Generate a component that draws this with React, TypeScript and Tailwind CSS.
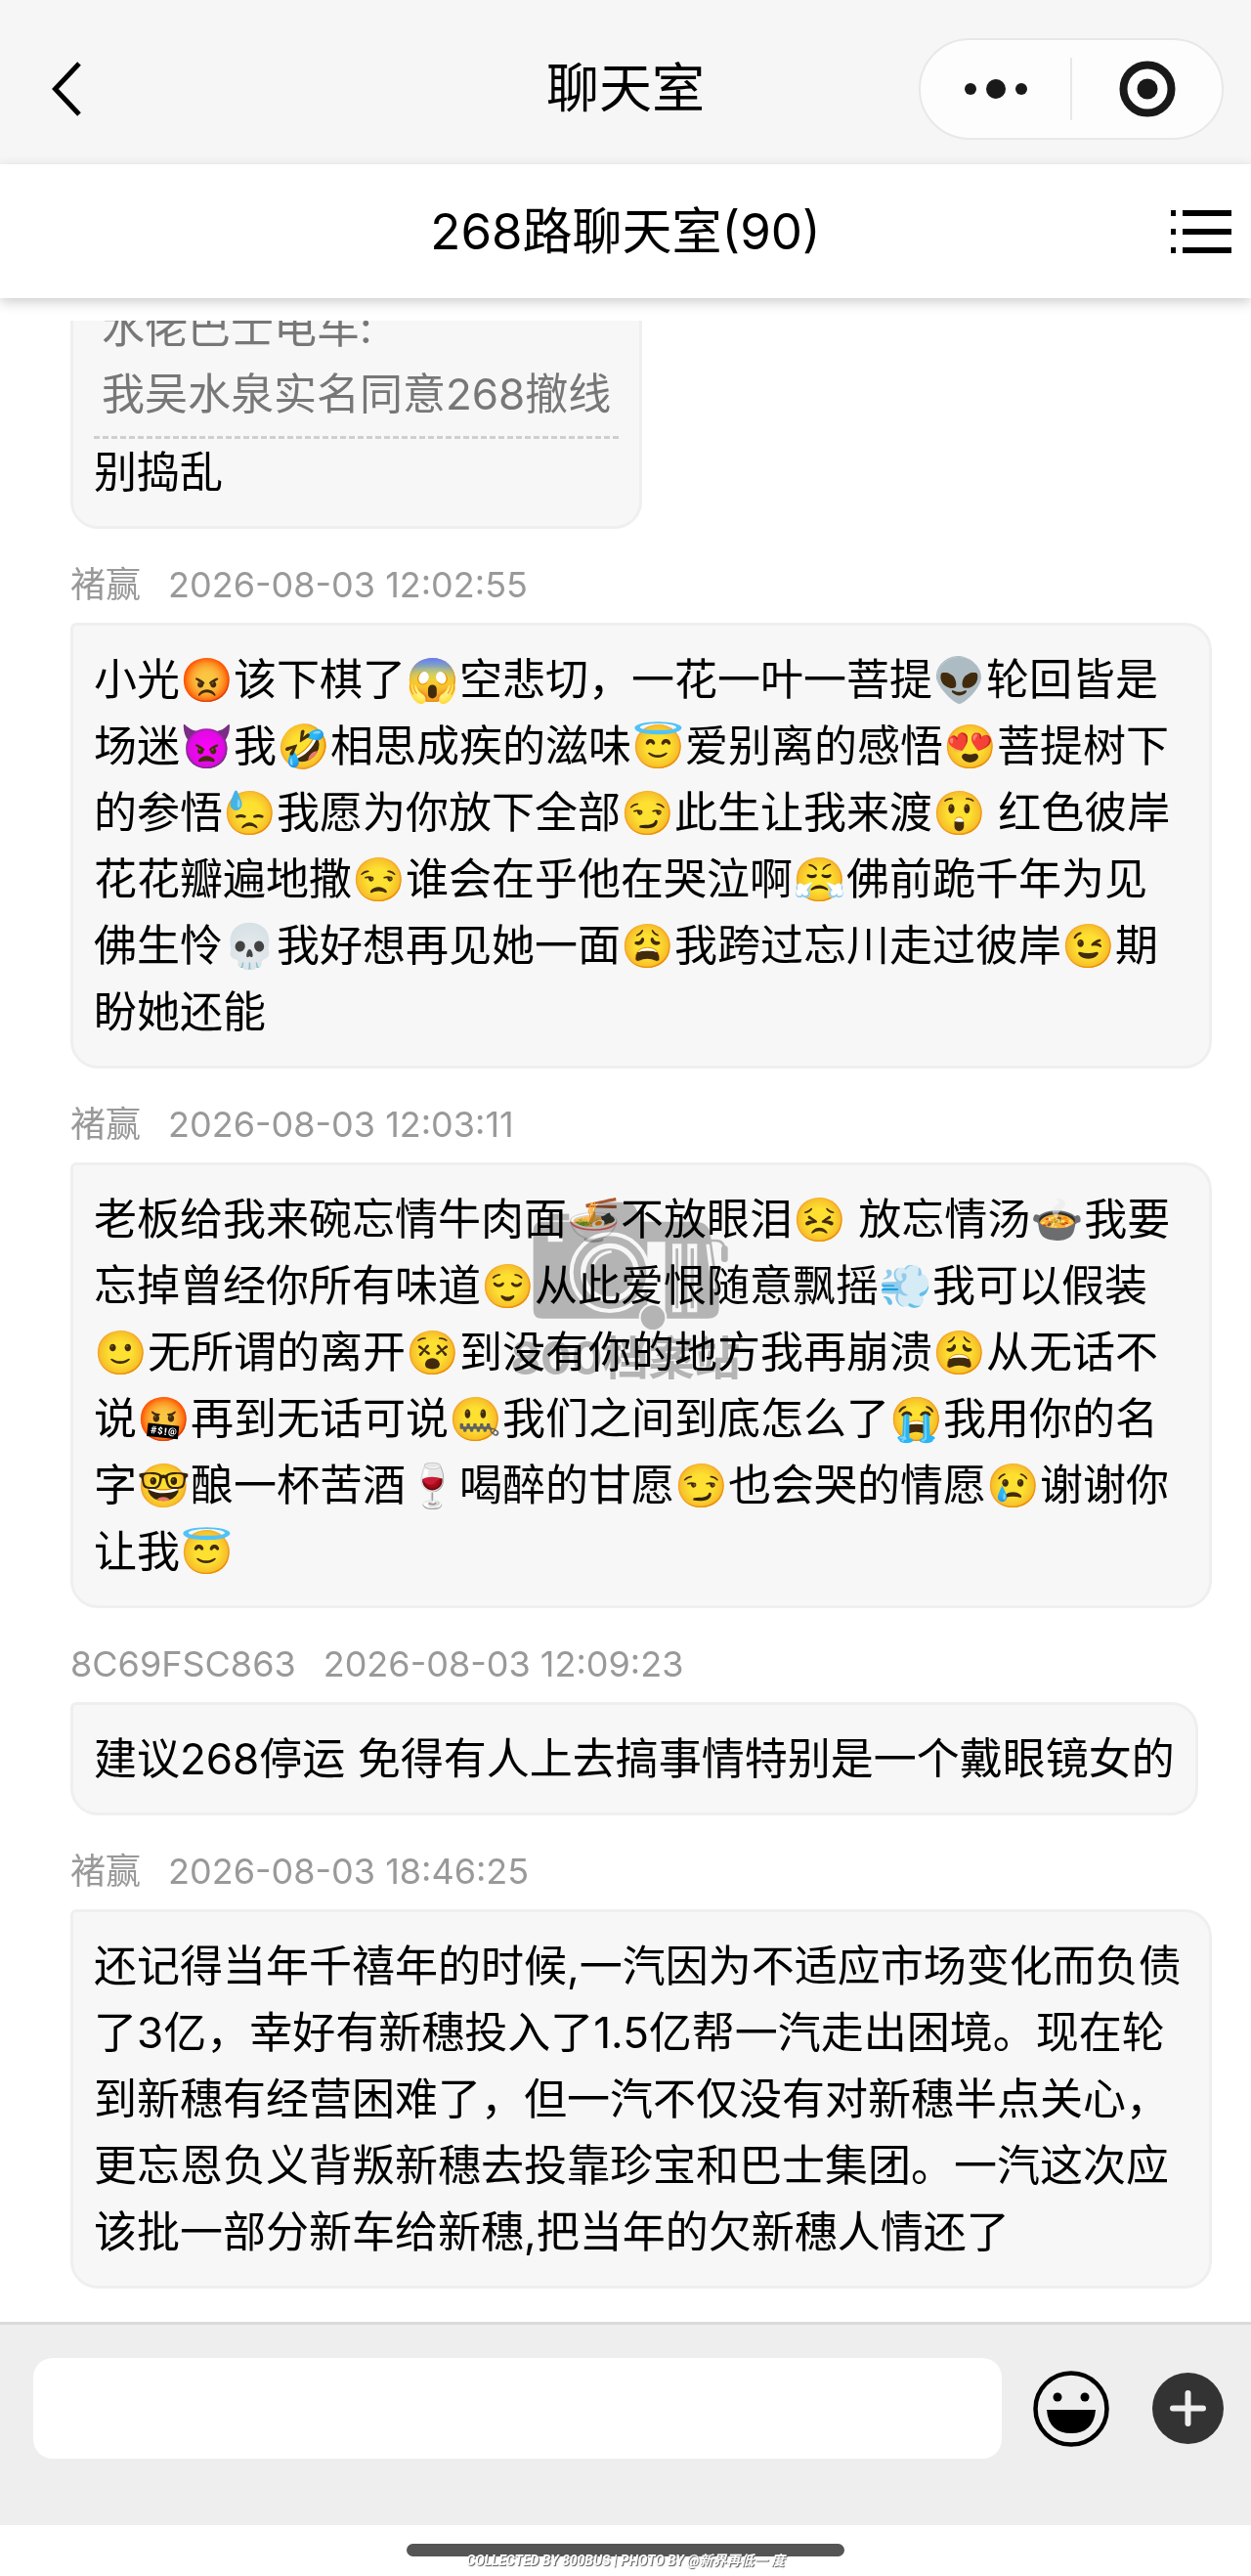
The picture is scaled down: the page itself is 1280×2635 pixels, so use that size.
import { useState } from "react";

type Message = {
  id: number;
  user?: string;
  time?: string;
  quote?: { user: string; text: string };
  text: string;
};

const messages: Message[] = [
  {
    id: 1,
    quote: { user: "水佬巴士电车:", text: "我吴水泉实名同意268撤线" },
    text: "别捣乱",
  },
  {
    id: 2,
    user: "褚赢",
    time: "2026-08-03 12:02:55",
    text: "小光😡该下棋了😱空悲切，一花一叶一菩提👽轮回皆是场迷👿我🤣相思成疾的滋味😇爱别离的感悟😍菩提树下的参悟😓我愿为你放下全部😏此生让我来渡😲 红色彼岸花花瓣遍地撒😒谁会在乎他在哭泣啊😤佛前跪千年为见佛生怜💀我好想再见她一面😩我跨过忘川走过彼岸😉期盼她还能",
  },
  {
    id: 3,
    user: "褚赢",
    time: "2026-08-03 12:03:11",
    text: "老板给我来碗忘情牛肉面🍜不放眼泪😣 放忘情汤🍲我要忘掉曾经你所有味道😌从此爱恨随意飘摇💨我可以假装🙂无所谓的离开😵到没有你的地方我再崩溃😩从无话不说🤬再到无话可说🤐我们之间到底怎么了😭我用你的名字🤓酿一杯苦酒🍷喝醉的甘愿😏也会哭的情愿😢谢谢你让我😇",
  },
  {
    id: 4,
    user: "8C69FSC863",
    time: "2026-08-03 12:09:23",
    text: "建议268停运 免得有人上去搞事情特别是一个戴眼镜女的",
  },
  {
    id: 5,
    user: "褚赢",
    time: "2026-08-03 18:46:25",
    text: "还记得当年千禧年的时候,一汽因为不适应市场变化而负债了3亿，幸好有新穗投入了1.5亿帮一汽走出困境。现在轮到新穗有经营困难了，但一汽不仅没有对新穗半点关心，更忘恩负义背叛新穗去投靠珍宝和巴士集团。一汽这次应该批一部分新车给新穗,把当年的欠新穗人情还了",
  },
];

const NavBar = () => (
  <header className="grid h-[168px] grid-cols-[1fr_auto_1fr] items-center bg-[#f6f6f6] px-[28px] pt-[14px]">
    <button type="button" aria-label="返回" className="ml-[20px] justify-self-start">
      <svg className="h-[56px] w-[40px]" viewBox="0 0 40 56" fill="none" stroke="#000" strokeWidth="5">
        <path d="M33 2 8.500 28 33 54" />
      </svg>
    </button>
    <h1 className="text-[54px] leading-[72px]">聊天室</h1>
    <div className="flex h-[104px] w-[312px] items-center justify-self-end rounded-full border-2 border-[#e8e8e8] bg-[#fdfdfd]">
      <button type="button" aria-label="更多" className="flex h-full flex-1 items-center justify-center">
        <svg className="h-[24px] w-[64px]" viewBox="0 0 64 24" fill="#191919">
          <circle cx="6" cy="12" r="6" />
          <circle cx="32" cy="12" r="10" />
          <circle cx="58" cy="12" r="6" />
        </svg>
      </button>
      <span className="h-[64px] w-[2px] bg-[#e8e8e8]" />
      <button type="button" aria-label="关闭" className="flex h-full flex-1 items-center justify-center">
        <svg className="size-[58px]" viewBox="0 0 58 58">
          <circle cx="29" cy="29" r="24.500" fill="none" stroke="#191919" strokeWidth="8" />
          <circle cx="29" cy="29" r="10.500" fill="#191919" />
        </svg>
      </button>
    </div>
  </header>
);

const RoomBar = () => (
  <div className="grid h-[137px] grid-cols-[1fr_auto_1fr] items-center bg-white px-[20px] shadow-[0_4px_12px_rgba(0,0,0,0.2)]">
    <span />
    <h2 className="text-[51px] leading-[72px]">268路聊天室(90)</h2>
    <button type="button" aria-label="菜单" className="justify-self-end">
      <svg className="h-[44px] w-[62px]" viewBox="0 0 62 44" fill="#000">
        <path d="M0 0h5v6H0zM0 19h5v6H0zM0 38h5v6H0z" />
        <path d="M12 0h50v6H12zM12 19h50v6H12zM12 38h50v6H12z" />
      </svg>
    </button>
  </div>
);

const Bubble = ({ message }: { message: Message }) => (
  <div className="w-fit max-w-full rounded-[28px] rounded-tl-[6px] border-3 border-[#efefef] bg-[#f7f7f7] px-[21px] py-[21px] text-[44px] leading-[68px]">
    {message.quote && (
      <blockquote className="border-b-3 border-dashed border-[#cfcfcf] px-2 pb-[9px] text-[#777]">
        <p>{message.quote.user}</p>
        <p>{message.quote.text}</p>
      </blockquote>
    )}
    <p className="break-words">{message.text}</p>
  </div>
);

// camera with the bus body on its right side
const Watermark = () => (
  <div className="pointer-events-none absolute inset-0 flex flex-col items-center justify-center pt-2 text-[#bababa] mix-blend-multiply">
    <svg className="ml-3 h-[134px] w-[204px]" viewBox="190 78 612 402" fill="currentColor">
      <path d="M365 148 388 100Q394 86 410 86H485Q500 86 507 100L530 148Z" />
      <path d="M240 122h65v20h-65z" />
      <path
        fillRule="evenodd"
        d="M222 146H690Q730 146 738 180L765 360V410Q765 443 730 443H222Q195 443 195 416V174Q195 146 222 146ZM240 188V208H285V188ZM545 208V428H712V208ZM725 215 742 352H754L736 215Z"
      />
      <path d="M600 204h112v228H600z" />
      <path d="M622 214h28v210h-28zM668 214h30v210h-30z" fill="#fff" />
      <path d="M632 228h8v184h-8zM678 228h10v184h-10z" />
      <circle cx="430" cy="302" r="118" stroke="#fff" strokeWidth="12" />
      <circle cx="430" cy="302" r="82" stroke="#fff" strokeWidth="16" />
      <path d="M375 292Q385 245 432 238" fill="none" stroke="#fff" strokeWidth="8" strokeLinecap="round" />
      <path d="M712 204H755Q782 204 782 235" fill="none" stroke="currentColor" strokeWidth="8" />
      <rect x="772" y="220" width="20" height="50" rx="9" />
      <circle cx="562" cy="440" r="40" stroke="#fff" strokeWidth="6" />
    </svg>
    <span className="text-[47px] leading-[56px] font-bold">800档案站</span>
  </div>
);

export default function App() {
  const [draft, setDraft] = useState("");

  return (
    <div className="relative flex min-h-screen flex-col bg-white font-['Inter','Noto_Sans_CJK_SC',sans-serif] text-black">
      <NavBar />
      <RoomBar />

      <main className="mt-[23px] flex-1 overflow-hidden pr-[40px] pb-[31px] pl-[72px]">
        <ul className="-mt-[51px]">
          {messages.map((message) => (
            <li key={message.id}>
              {message.user && (
                <div className="mt-[30px] mb-[12px] flex gap-[28px] text-[36px] leading-[54px] text-[#999]">
                  <span>{message.user}</span>
                  <time>{message.time}</time>
                </div>
              )}
              <Bubble message={message} />
            </li>
          ))}
        </ul>
      </main>

      <footer>
        <form
          onSubmit={(e) => e.preventDefault()}
          className="flex items-center border-t-3 border-[#dadada] bg-[#eee] pt-[34px] pr-[28px] pb-[68px] pl-[34px]"
        >
          <input
            type="text"
            aria-label="消息"
            value={draft}
            onChange={(e) => setDraft(e.target.value)}
            className="h-[103px] min-w-0 flex-1 rounded-[20px] bg-white px-6 text-[44px] outline-none"
          />
          <button type="button" aria-label="表情" className="ml-[32px]">
            <svg className="size-[78px]" viewBox="0 0 78 78">
              <circle cx="39" cy="39" r="36.500" fill="none" stroke="#000" strokeWidth="4.500" />
              <circle cx="25" cy="27" r="4.500" />
              <circle cx="53" cy="27" r="4.500" />
              <path d="M14 40H64Q62 64 39 64T14 40Z" />
            </svg>
          </button>
          <button type="button" aria-label="添加" className="ml-[44px]">
            <svg className="size-[73px]" viewBox="0 0 73 73">
              <circle cx="36.500" cy="36.500" r="36.500" fill="#333" />
              <path d="M36.500 21V52M21 36.500H52" stroke="#eee" strokeWidth="6" strokeLinecap="round" />
            </svg>
          </button>
        </form>
        <div className="relative flex h-[52px] justify-center pt-[19px]">
          <span className="h-[13px] w-[448px] rounded-full bg-[#555]" />
          <p className="absolute bottom-[4px] font-['Roboto','Noto_Sans_CJK_SC',sans-serif] text-[14px] leading-[24px] font-bold whitespace-pre text-white italic [text-shadow:1px_1px_1px_#555]">
            COLLECTED BY 800BUS | PHOTO BY @新界再低一 度
          </p>
        </div>
      </footer>

      <Watermark />
    </div>
  );
}
